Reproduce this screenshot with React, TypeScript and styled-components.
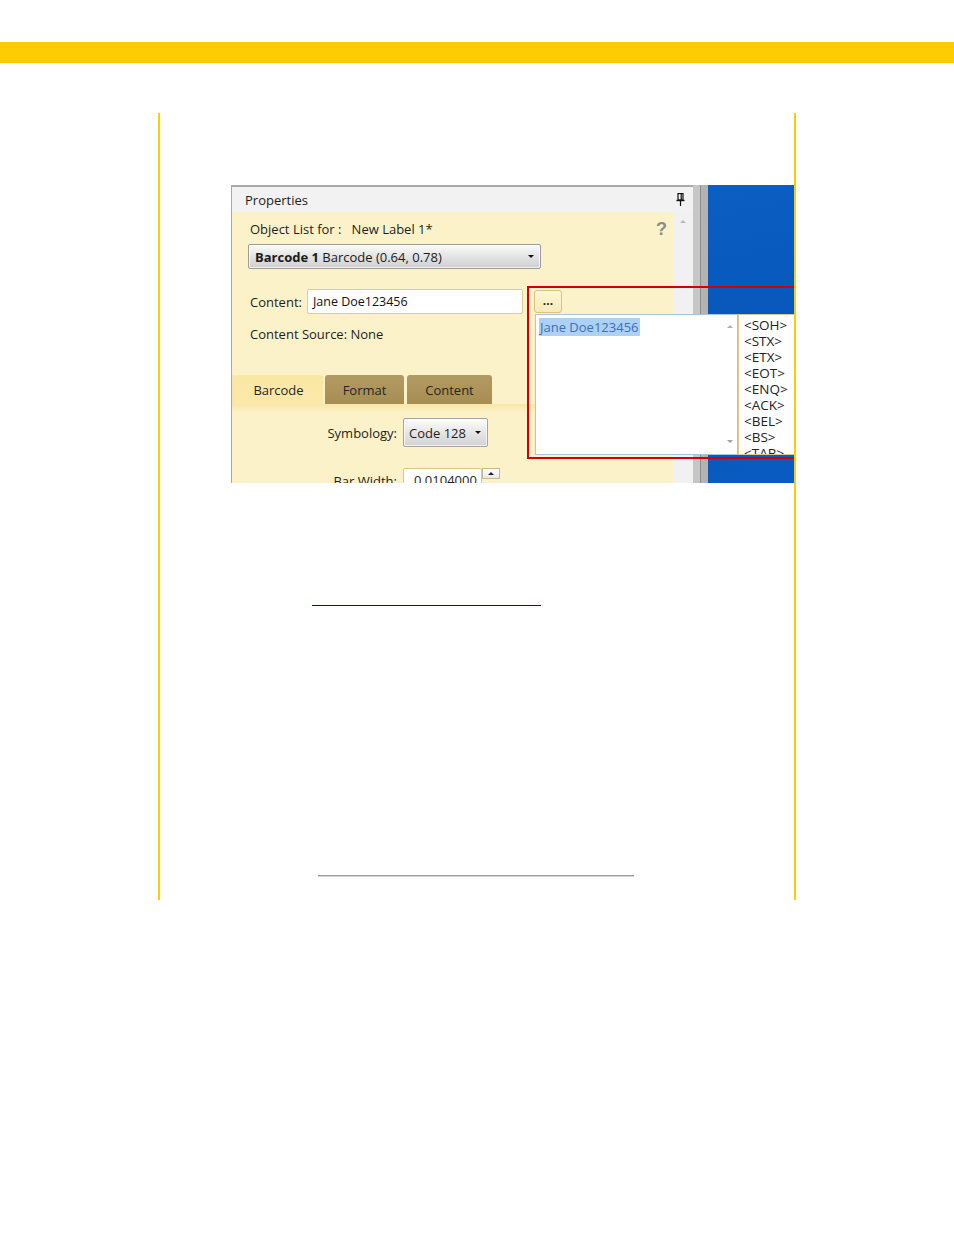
import React from "react";
import styled, { createGlobalStyle } from "styled-components";

const GlobalStyle = createGlobalStyle`
  html, body { margin: 0; padding: 0; background: #ffffff; }
  body { font-family: "Open Sans", "Noto Sans", sans-serif; }
  * { box-sizing: border-box; }
`;

const UI_FONT = `"Open Sans", "Noto Sans", sans-serif`;

const Page = styled.div`
  padding-top: 42px;
  width: 954px;
  height: 1235px;
`;

const TopBar = styled.div`
  height: 21px;
  background: #ffcc00;
`;

const Frame = styled.div`
  margin: 50px 0 0 158px;
  width: 638px;
  height: 787px;
  border-left: 2px solid #ffcc00;
  border-right: 2px solid #ffcc00;
  padding: 72px 0 0 71px;
  display: flex;
  flex-direction: column;
  align-items: flex-start;
`;

const Shot = styled.div`
  position: relative;
  width: 563px;
  height: 298px;
  overflow: hidden;
  display: flex;
  font-family: ${UI_FONT};
  font-size: 12.5px;
  color: #1e1e1e;
`;

const Panel = styled.div`
  width: 462px;
  height: 100%;
  display: flex;
  flex-direction: column;
  border-top: 2px solid #a9a9a9;
  border-left: 1px solid #a9a9a9;
`;

const PanelHeader = styled.div`
  flex-shrink: 0;
  height: 25px;
  background: #f2f2f2;
  display: flex;
  align-items: center;
  justify-content: space-between;
  padding: 0 8px 0 13px;
`;

const PanelTitle = styled.span`
  font-size: 13px;
  color: #222;
`;

const PanelBody = styled.div`
  flex: 1;
  min-height: 0;
  overflow: hidden;
  display: flex;
`;

const PanelContent = styled.div`
  flex: 1;
  background: #fcf2c9;
  padding-left: 17px;
  display: flex;
  flex-direction: column;
  align-items: flex-start;

  & > * {
    flex-shrink: 0;
  }
`;

const ScrollTrack = styled.div`
  width: 20px;
  background: #f1f1f1;
  display: flex;
  justify-content: center;
  align-items: flex-start;
  padding-top: 8px;
`;

const Arrow = styled.span<{ $dir: "up" | "down"; $color?: string; $size?: number }>`
  display: block;
  width: 0;
  height: 0;
  border-left: ${(p) => p.$size ?? 3}px solid transparent;
  border-right: ${(p) => p.$size ?? 3}px solid transparent;
  ${(p) =>
    p.$dir === "up"
      ? `border-bottom: ${p.$size ?? 3}px solid ${p.$color ?? "#b4b4b4"};`
      : `border-top: ${p.$size ?? 3}px solid ${p.$color ?? "#b4b4b4"};`}
`;

const ObjectListRow = styled.div`
  margin-top: 8px;
  width: 100%;
  height: 18px;
  display: flex;
  align-items: center;
  justify-content: space-between;
  padding: 0 6px 0 1px;
  font-size: 13px;
`;

const Help = styled.span`
  font-family: "Liberation Sans", sans-serif;
  font-weight: bold;
  font-size: 18px;
  color: #8c8c8c;
  line-height: 18px;
`;

const ObjectSelect = styled.div`
  margin: 6px 0 0 -1px;
  width: 293px;
  height: 25px;
  border: 1px solid #9c9c9c;
  border-radius: 2px;
  background: linear-gradient(180deg, #fbfbfb 0%, #e6e6e6 45%, #cfcfcf 100%);
  box-shadow: inset 0 0 0 1px rgba(255, 255, 255, 0.7);
  display: flex;
  align-items: center;
  justify-content: space-between;
  padding: 0 6px 0 6px;
  font-size: 13px;
  color: #1a1a1a;

  b { font-weight: 700; }
`;

const ContentRow = styled.div`
  margin-top: 20px;
  display: flex;
  align-items: center;
  height: 25px;
  padding-left: 1px;
`;

const FieldLabel = styled.span`
  font-size: 13px;
  margin-right: 5px;
`;

const TextBox = styled.div<{ $width: number }>`
  width: ${(p) => p.$width}px;
  height: 25px;
  background: #ffffff;
  border: 1px solid #e3cd88;
  border-radius: 2px;
  display: flex;
  align-items: center;
  padding-left: 5px;
  font-size: 12.5px;
  color: #111;
`;

const EllipsisButton = styled.div`
  margin-left: 11px;
  width: 28px;
  height: 23px;
  border: 1px solid #d9c27a;
  border-radius: 3px;
  background: linear-gradient(180deg, #fdf6d8, #f9eab6);
  display: flex;
  align-items: center;
  justify-content: center;
  font-size: 12px;
  font-weight: 700;
  line-height: 1;
  padding-bottom: 2px;
`;

const SourceText = styled.div`
  margin-top: 11px;
  height: 18px;
  line-height: 18px;
  padding-left: 1px;
  font-size: 13px;
`;

const TabBar = styled.div`
  margin: 32px 0 0 -17px;
  width: calc(100% + 17px);
  display: flex;
  flex-direction: column;
`;

const TabRow = styled.div`
  display: flex;
  padding-left: 2px;
  height: 29px;
  background: linear-gradient(90deg, #fae7a6 0, #fae7a6 2px, transparent 2px);
`;

const Tab = styled.div<{ $active?: boolean; $width: number; $gap?: number }>`
  width: ${(p) => p.$width}px;
  margin-left: ${(p) => p.$gap ?? 0}px;
  height: 29px;
  border-radius: 3px 3px 0 0;
  display: flex;
  align-items: center;
  justify-content: center;
  font-size: 13px;
  color: #262626;
  background: ${(p) =>
    p.$active
      ? "linear-gradient(180deg, #fbe7a3, #fbe9ab)"
      : "linear-gradient(180deg, #b29b62, #a68d54)"};
`;

const TabBand = styled.div`
  height: 9px;
  background: linear-gradient(180deg, #f9e6a5 0%, #fbedbd 60%, #fcf2c9 100%);
`;

const FormRow = styled.div<{ $top: number }>`
  margin: ${(p) => p.$top}px 0 0 -17px;
  display: grid;
  grid-template-columns: 148px auto auto;
  column-gap: 6px;
  align-items: center;
  padding-left: 17px;
`;

const FormLabel = styled.span`
  text-align: right;
  font-size: 13px;
`;

const SmallSelect = styled.div`
  width: 85px;
  height: 29px;
  border: 1px solid #a4a4a4;
  border-radius: 2px;
  background: linear-gradient(180deg, #fdfdfd 0%, #e8e8e8 45%, #d2d2d2 100%);
  box-shadow: inset 0 0 0 1px rgba(255, 255, 255, 0.7);
  display: flex;
  align-items: center;
  justify-content: space-between;
  padding: 0 6px 0 5px;
  font-size: 13px;
`;

const NumberWrap = styled.div`
  display: flex;
  align-items: flex-start;
`;

const NumberBox = styled.div`
  width: 79px;
  height: 25px;
  background: #fff;
  border: 1px solid #e0c77e;
  border-radius: 2px;
  padding-left: 10px;
  font-size: 13px;
  line-height: 23px;
`;

const SpinUp = styled.div`
  width: 18px;
  height: 11px;
  border: 1px solid #c9b787;
  background: linear-gradient(180deg, #ffffff, #e8e8e8);
  display: flex;
  align-items: center;
  justify-content: center;
`;

const Splitter = styled.div`
  width: 15px;
  flex-shrink: 0;
  background: linear-gradient(
    90deg,
    #c6c6c6 0,
    #c6c6c6 7px,
    #8e8e8e 7px,
    #8e8e8e 8px,
    #b3b3b3 8px
  );
`;

const Desktop = styled.div`
  flex: 1;
  background: linear-gradient(170deg, #0b5ec3 0%, #0857bb 50%, #0a5bc1 100%);
`;

const Outline = styled.div`
  position: absolute;
  left: 296px;
  top: 101px;
  width: 300px;
  height: 173px;
  border: 2px solid #d20000;
  pointer-events: none;
`;

const Popup = styled.div`
  position: absolute;
  left: 304px;
  top: 129px;
  height: 141px;
  display: flex;
`;

const EditArea = styled.div`
  width: 203px;
  height: 100%;
  background: #fff;
  border: 1px solid #a6c6e6;
  display: flex;
  justify-content: space-between;
  padding: 3px 0 0 3px;
`;

const Selected = styled.span`
  align-self: flex-start;
  background: #aed0f4;
  color: #3a72b8;
  font-size: 13px;
  line-height: 18px;
  padding: 0 1px;
`;

const EditScroll = styled.div`
  width: 14px;
  display: flex;
  flex-direction: column;
  justify-content: space-between;
  align-items: center;
  padding: 7px 0 11px;
`;

const CodeList = styled.div`
  width: 60px;
  height: 100%;
  background: #fff;
  border: 1px solid #dcc98b;
  border-right: none;
  padding: 2px 0 0 5px;
  overflow: hidden;
`;

const CodeItem = styled.div`
  font-size: 13.5px;
  line-height: 16px;
  color: #222;
  white-space: nowrap;
`;

const LinkLine = styled.a`
  display: block;
  margin: 122px 0 0 81px;
  width: 229px;
  height: 1px;
  background: #0000cc;
`;

const Rule = styled.div`
  margin: 269px 0 0 87px;
  width: 316px;
  height: 2px;
  border-top: 1px solid #9e9e9e;
  border-bottom: 1px solid #d4d4d4;
  background: #a8a8a8;
`;

const PinIcon = () => (
  <svg width="9" height="13" viewBox="0 0 9 13">
    <rect x="2" y="0.5" width="5" height="6.5" fill="none" stroke="#111" strokeWidth="1.2" />
    <line x1="5.2" y1="1" x2="5.2" y2="7" stroke="#111" strokeWidth="1.2" />
    <line x1="0.5" y1="7.5" x2="8.5" y2="7.5" stroke="#111" strokeWidth="1.4" />
    <line x1="4.5" y1="7.5" x2="4.5" y2="13" stroke="#111" strokeWidth="1.2" />
  </svg>
);

const codes = ["<SOH>", "<STX>", "<ETX>", "<EOT>", "<ENQ>", "<ACK>", "<BEL>", "<BS>", "<TAB>"];

export default function App() {
  return (
    <Page>
      <GlobalStyle />
      <TopBar />
      <Frame>
        <Shot>
          <Panel>
            <PanelHeader>
              <PanelTitle>Properties</PanelTitle>
              <PinIcon />
            </PanelHeader>
            <PanelBody>
              <PanelContent>
                <ObjectListRow>
                  <span>Object List for :&nbsp;&nbsp; New Label 1*</span>
                  <Help>?</Help>
                </ObjectListRow>
                <ObjectSelect>
                  <span>
                    <b>Barcode 1</b> Barcode (0.64, 0.78)
                  </span>
                  <Arrow $dir="down" $color="#111" $size={3} />
                </ObjectSelect>
                <ContentRow>
                  <FieldLabel>Content:</FieldLabel>
                  <TextBox $width={216}>Jane Doe123456</TextBox>
                  <EllipsisButton>...</EllipsisButton>
                </ContentRow>
                <SourceText>Content Source: None</SourceText>
                <TabBar>
                  <TabRow>
                    <Tab $active $width={89}>Barcode</Tab>
                    <Tab $width={79} $gap={2}>Format</Tab>
                    <Tab $width={85} $gap={3}>Content</Tab>
                  </TabRow>
                  <TabBand />
                </TabBar>
                <FormRow $top={5}>
                  <FormLabel>Symbology:</FormLabel>
                  <SmallSelect>
                    <span>Code 128</span>
                    <Arrow $dir="down" $color="#111" $size={3} />
                  </SmallSelect>
                </FormRow>
                <FormRow $top={21}>
                  <FormLabel>Bar Width:</FormLabel>
                  <NumberWrap>
                    <NumberBox>0.0104000</NumberBox>
                    <SpinUp>
                      <Arrow $dir="up" $color="#222" $size={3} />
                    </SpinUp>
                  </NumberWrap>
                </FormRow>
              </PanelContent>
              <ScrollTrack>
                <Arrow $dir="up" $color="#b8b8b8" $size={3} />
              </ScrollTrack>
            </PanelBody>
          </Panel>
          <Splitter />
          <Desktop />
          <Popup>
            <EditArea>
              <Selected>Jane Doe123456</Selected>
              <EditScroll>
                <Arrow $dir="up" $color="#b0b0b0" $size={3} />
                <Arrow $dir="down" $color="#a0a0a0" $size={3} />
              </EditScroll>
            </EditArea>
            <CodeList>
              {codes.map((c) => (
                <CodeItem key={c}>{c}</CodeItem>
              ))}
            </CodeList>
          </Popup>
          <Outline />
        </Shot>
        <LinkLine href="#" aria-label="link" />
        <Rule />
      </Frame>
    </Page>
  );
}
